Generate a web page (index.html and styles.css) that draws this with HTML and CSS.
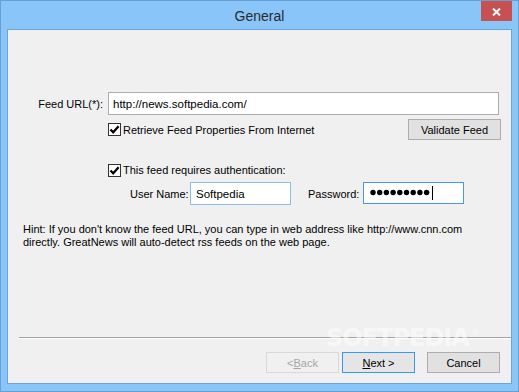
FILE: index.html
```html
<!DOCTYPE html>
<html>
<head>
<meta charset="utf-8">
<link rel="stylesheet" href="styles.css">
</head>
<body>
<div class="window">
  <div class="titlebar">
    <div class="title">General</div>
    <div class="close">
      <svg width="9" height="8" viewBox="0 0 9 8"><path d="M1 0.5 L8 7.5 M8 0.5 L1 7.5" stroke="#fff" stroke-width="2"/></svg>
    </div>
  </div>
  <div class="client">
    <div class="row row-url">
      <span class="lbl lbl-url">Feed URL(*):</span>
      <span class="field field-url">http://news.softpedia.com/</span>
    </div>
    <div class="row row-retrieve">
      <span class="cb"><svg width="11" height="11" viewBox="0 0 11 11"><path d="M1.5 5.5 L4.2 8.3 L9.6 2.2" fill="none" stroke="#000" stroke-width="2.2"/></svg></span>
      <span class="cb-text">Retrieve Feed Properties From Internet</span>
      <span class="btn btn-validate">Validate Feed</span>
    </div>
    <div class="row row-auth">
      <span class="cb"><svg width="11" height="11" viewBox="0 0 11 11"><path d="M1.5 5.5 L4.2 8.3 L9.6 2.2" fill="none" stroke="#000" stroke-width="2.2"/></svg></span>
      <span class="cb-text">This feed requires authentication:</span>
    </div>
    <div class="row row-cred">
      <span class="lbl lbl-user">User Name:</span>
      <span class="field field-user">Softpedia</span>
      <span class="lbl lbl-pass">Password:</span>
      <span class="field field-pass">
        <svg width="61" height="7" viewBox="0 0 61 7">
          <circle cx="3" cy="3.5" r="2.7"/><circle cx="9.7" cy="3.5" r="2.7"/><circle cx="16.4" cy="3.5" r="2.7"/>
          <circle cx="23.1" cy="3.5" r="2.7"/><circle cx="29.8" cy="3.5" r="2.7"/><circle cx="36.5" cy="3.5" r="2.7"/>
          <circle cx="43.2" cy="3.5" r="2.7"/><circle cx="49.9" cy="3.5" r="2.7"/><circle cx="56.6" cy="3.5" r="2.7"/>
        </svg>
        <span class="caret"></span>
      </span>
    </div>
    <p class="hint">Hint: If you don't know the feed URL, you can type in web address like http://www.cnn.com<br>directly. GreatNews will auto-detect rss feeds on the web page.</p>
    <div class="sep"></div>
    <div class="footer">
      <span class="btn btn-back disabled">&lt; <u>B</u>ack</span>
      <span class="btn btn-next default"><u>N</u>ext &gt;</span>
      <span class="btn btn-cancel">Cancel</span>
    </div>
    <div class="watermark">SOFTPEDIA<span class="reg">®</span></div>
  </div>
</div>
</body>
</html>
```
FILE: styles.css
```css
html, body {
  margin: 0;
  padding: 0;
  background: #fff;
}
.window {
  position: relative;
  width: 519px;
  height: 392px;
  box-sizing: border-box;
  border: 1px solid #6a9fd4;
  background: #89c5f8;
  display: flex;
  flex-direction: column;
  font-family: "Liberation Sans", Arial, sans-serif;
  font-size: 11px;
  color: #000;
}
.titlebar {
  height: 28px;
  display: grid;
  grid-template-columns: 1fr auto 1fr;
}
.title {
  grid-column: 2;
  font-size: 14px;
  line-height: 28px;
  padding-top: 1px;
  color: #2a2a2a;
}
.close {
  grid-column: 3;
  justify-self: end;
  align-self: start;
  margin-right: 6px;
  width: 31px;
  height: 20px;
  background: #c75050;
  display: flex;
  align-items: center;
  justify-content: center;
}
.close svg { display: block; margin-top: 1px; }
.client {
  position: relative;
  margin: 0 6px 7px 6px;
  height: 355px;
  box-sizing: border-box;
  border: 1px solid #6ea4d9;
  background: #f0f0f0;
  display: flex;
  flex-direction: column;
  padding: 62px 0 10px 0;
  overflow: hidden;
}
.row {
  display: flex;
  align-items: center;
}
.lbl { white-space: nowrap; }
.field {
  box-sizing: border-box;
  height: 23px;
  background: #fff;
  border: 1px solid #abadb3;
  padding: 0 4px;
  display: flex;
  align-items: center;
  white-space: nowrap;
  font-size: 11.5px;
}
.row-url { height: 23px; }
.lbl-url {
  width: 95px;
  text-align: right;
  margin-right: 5px;
}
.field-url { width: 391px; }
.row-retrieve {
  margin-top: 4px;
  height: 21px;
  padding-left: 100px;
  padding-right: 10px;
}
.cb {
  box-sizing: border-box;
  width: 13px;
  height: 13px;
  border: 1px solid #333;
  background: #fff;
  display: flex;
  align-items: center;
  justify-content: center;
  flex: none;
}
.cb svg { display: block; }
.cb-text {
  margin-left: 2px;
}
.btn {
  box-sizing: border-box;
  width: 73px;
  height: 21px;
  border: 1px solid #adadad;
  background: #e1e1e1;
  display: flex;
  align-items: center;
  justify-content: center;
  white-space: nowrap;
}
.btn-validate {
  margin-left: auto;
  width: 93px;
}
.row-auth {
  margin-top: 22px;
  height: 16px;
  padding-left: 100px;
}
.row-cred {
  margin-top: 4px;
  height: 23px;
}
.lbl-user {
  margin-left: 122px;
  width: 60px;
}
.field-user {
  width: 101px;
  border-color: #8cbcec;
  padding-left: 5px;
}
.lbl-pass {
  margin-left: 17px;
  width: 55px;
}
.field-pass {
  width: 101px;
  height: 22px;
  margin-top: -2px;
  border-color: #4c97e3;
  padding-left: 6px;
}
.field-pass svg { display: block; }
.caret {
  width: 1px;
  height: 14px;
  background: #000;
  margin-left: 1px;
}
.hint {
  margin: 18px 0 0 15px;
  line-height: 13px;
  white-space: nowrap;
}
.sep {
  margin: auto 0 0 11px;
  border-top: 1px solid #a0a0a0;
  border-bottom: 1px solid #fff;
  height: 0;
}
.footer {
  margin-top: 13px;
  display: flex;
  padding-left: 258px;
}
.btn.disabled {
  background: #f0f0f0;
  border-color: #d9d9d9;
  color: #a6a6a6;
}
.btn.default {
  border-color: #3399ff;
  background: #e5e5e5;
  margin-left: 3px;
}
.btn-cancel { margin-left: 12px; }
.watermark {
  position: absolute;
  left: 318px;
  top: 296px;
  font-family: "DejaVu Sans", sans-serif;
  font-weight: bold;
  font-size: 24px;
  line-height: 24px;
  letter-spacing: -1px;
  color: rgba(255, 255, 255, 0.55);
  pointer-events: none;
}
.reg {
  position: relative;
  top: -10px;
  margin-left: 2px;
  font-size: 9px;
  font-weight: normal;
}
```
